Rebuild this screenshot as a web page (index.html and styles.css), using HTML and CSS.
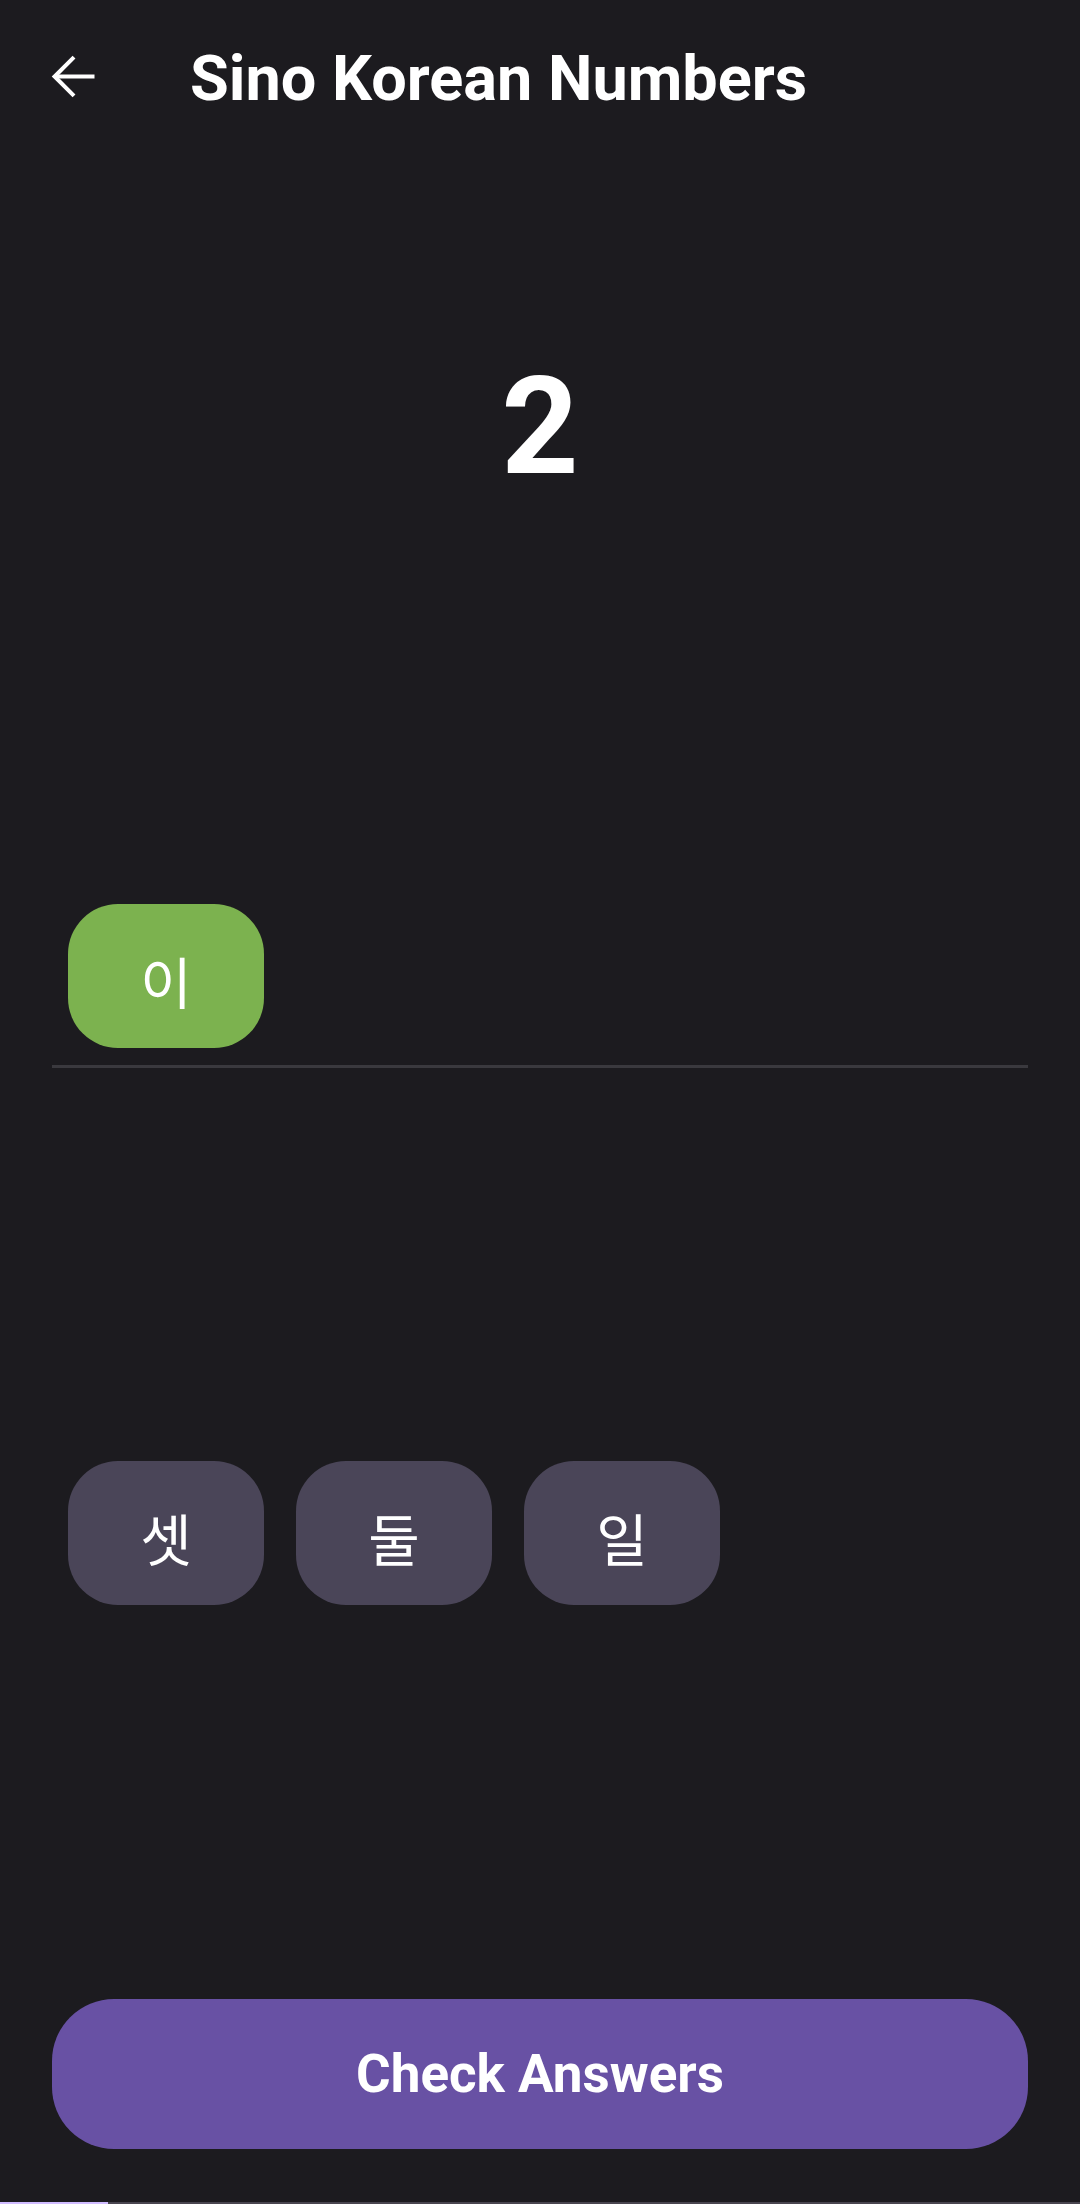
FILE: index.html
```html
<!DOCTYPE html>
<html lang="ko">
<head>
<meta charset="utf-8">
<title>Sino Korean Numbers</title>
<link rel="stylesheet" href="styles.css">
</head>
<body>
<div class="screen">
  <header class="appbar">
    <button class="back" aria-label="Back">
      <svg width="63" height="63" viewBox="0 0 24 24" fill="none" stroke="#ffffff" stroke-width="1.55" stroke-linecap="butt" stroke-linejoin="miter">
        <path d="M20 12H5"/>
        <path d="M12.2 4.6L4.8 12l7.4 7.4"/>
      </svg>
    </button>
    <h1 class="title">Sino Korean Numbers</h1>
  </header>

  <main class="content">
    <div class="number">2</div>

    <div class="answer">
      <span class="chip chip-selected">이</span>
    </div>

    <div class="options">
      <span class="chip chip-option">셋</span>
      <span class="chip chip-option">둘</span>
      <span class="chip chip-option">일</span>
    </div>

    <button class="check">Check Answers</button>
  </main>

  <div class="progress"><div class="progress-fill"></div></div>
</div>
</body>
</html>
```

FILE: styles.css
```css
html, body {
  margin: 0;
  padding: 0;
  background: #1c1b1f;
}

.screen {
  width: 1080px;
  height: 2204px;
  display: flex;
  flex-direction: column;
  background: #1c1b1f;
  font-family: Roboto, "Noto Sans", "Noto Sans CJK KR", sans-serif;
  color: #ffffff;
  overflow: hidden;
}

.appbar {
  height: 152px;
  flex: 0 0 152px;
  display: flex;
  align-items: center;
  padding-left: 42px;
  box-sizing: border-box;
  background: #1c1b1f;
}

.back {
  width: 63px;
  height: 63px;
  padding: 0;
  margin: 0;
  border: 0;
  background: transparent;
  display: flex;
  align-items: center;
  justify-content: center;
}

.back svg {
  display: block;
}

.title {
  margin: 5px 0 0 85px;
  font-size: 63px;
  font-weight: 700;
  letter-spacing: 0;
  line-height: 1;
  color: #ffffff;
}

.content {
  flex: 1 1 auto;
  display: flex;
  flex-direction: column;
  padding: 0 52px;
}

.number {
  margin-top: 208px;
  text-align: center;
  font-size: 135px;
  font-weight: 700;
  line-height: 135px;
  height: 135px;
}

.answer {
  margin-top: 409px;
  display: flex;
  gap: 32px;
  padding: 0 16px 17px;
  border-bottom: 3px solid #3a393e;
}

.options {
  margin-top: 393px;
  display: flex;
  gap: 32px;
  padding: 0 16px;
}

.chip {
  width: 196px;
  height: 144px;
  border-radius: 50px;
  display: flex;
  align-items: center;
  justify-content: center;
  font-family: "Noto Sans CJK KR", sans-serif;
  font-size: 56px;
  font-weight: 400;
  color: #ffffff;
  box-sizing: border-box;
  padding-top: 6px;
}

.chip-selected {
  background: #7cb24f;
}

.chip-option {
  background: #4a4558;
}

.check {
  margin-top: 394px;
  height: 150px;
  width: 100%;
  border: 0;
  border-radius: 62px;
  background: #6851a4;
  color: #ffffff;
  font-family: Roboto, "Noto Sans", sans-serif;
  font-size: 53px;
  font-weight: 700;
  padding: 0;
}

.progress {
  margin-top: auto;
  height: 2px;
  background: #49454f;
}

.progress-fill {
  width: 108px;
  height: 2px;
  background: #d0bcff;
}
```
